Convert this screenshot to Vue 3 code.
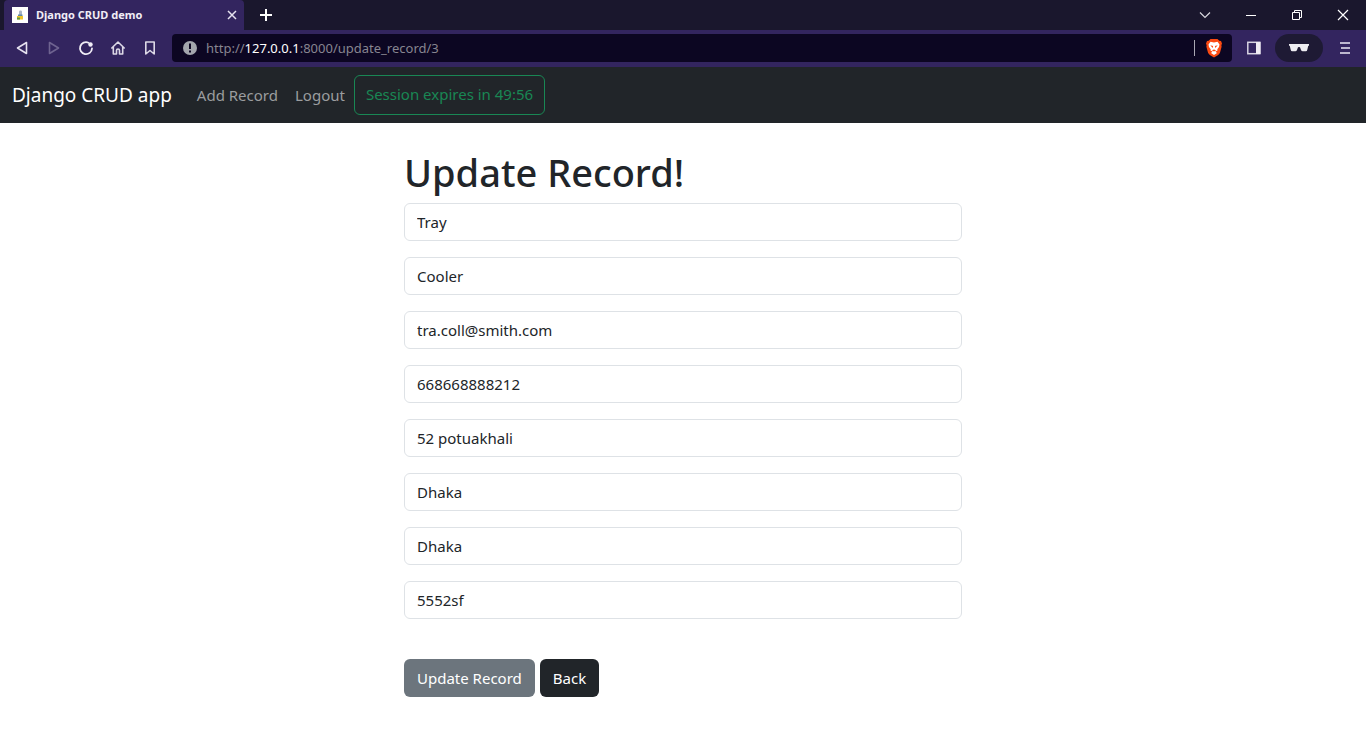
<script setup>
import { ref } from 'vue'

const fields = ref([
  { id: 'first_name', label: 'First name', type: 'text', value: 'Tray' },
  { id: 'last_name', label: 'Last name', type: 'text', value: 'Cooler' },
  { id: 'email', label: 'Email', type: 'text', value: 'tra.coll@smith.com' },
  { id: 'phone', label: 'Phone', type: 'text', value: '668668888212' },
  { id: 'address', label: 'Address', type: 'text', value: '52 potuakhali' },
  { id: 'city', label: 'City', type: 'text', value: 'Dhaka' },
  { id: 'state', label: 'State', type: 'text', value: 'Dhaka' },
  { id: 'zipcode', label: 'Zipcode', type: 'text', value: '5552sf' },
])
</script>

<template>
  <div class="window">
    <header class="browser">
      <div class="titlebar">
        <div class="tab">
          <svg class="favicon" width="16" height="16" viewBox="0 0 16 16" aria-hidden="true">
            <rect width="16" height="16" fill="#fff" />
            <path d="M7 4.500C7 3 10 3 10 4.500V8H7z" fill="#a9b4c4" />
            <path d="M6 7.500h4.500v2H6z" fill="#5f86a8" />
            <path d="M5 9h6v3.500H5z" fill="#f0c52c" />
            <path d="M5 10.500h3v2H5z" fill="#5d9a46" />
          </svg>
          <span class="tab-title">Django CRUD demo</span>
          <button type="button" class="icon-btn tab-close" aria-label="Close tab">
            <svg width="16" height="16" viewBox="0 0 16 16"><path d="M4 4l8 8M12 4l-8 8" stroke="#e6e2f0" stroke-width="1.500" /></svg>
          </button>
        </div>
        <button type="button" class="icon-btn new-tab" aria-label="New tab">
          <svg width="16" height="16" viewBox="0 0 16 16"><path d="M8 2v12M2 8h12" stroke="#fff" stroke-width="2" /></svg>
        </button>
        <div class="window-controls">
          <button type="button" class="icon-btn" aria-label="Search tabs">
            <svg width="16" height="16" viewBox="0 0 16 16"><path d="M3 5.500l5 5 5-5" fill="none" stroke="#d8d7dd" stroke-width="1.200" /></svg>
          </button>
          <button type="button" class="icon-btn" aria-label="Minimize">
            <svg width="16" height="16" viewBox="0 0 16 16"><path d="M3 8.500h10" stroke="#fff" /></svg>
          </button>
          <button type="button" class="icon-btn" aria-label="Restore">
            <svg width="16" height="16" viewBox="0 0 16 16"><path d="M3.500 5.500h7v7h-7zM5.500 5.500v-2h7v7h-2" fill="none" stroke="#fff" /></svg>
          </button>
          <button type="button" class="icon-btn" aria-label="Close">
            <svg width="16" height="16" viewBox="0 0 16 16"><path d="M3 3l10 10M13 3L3 13" stroke="#fff" stroke-width="1.200" /></svg>
          </button>
        </div>
      </div>

      <div class="toolbar">
        <div class="nav-buttons">
          <button type="button" class="icon-btn" aria-label="Back">
            <svg width="16" height="16" viewBox="0 0 16 16"><path d="M12.500 2.500v11L3.500 8z" fill="none" stroke="#e6e2f0" stroke-width="1.600" stroke-linejoin="round" /></svg>
          </button>
          <button type="button" class="icon-btn" aria-label="Forward">
            <svg width="16" height="16" viewBox="0 0 16 16"><path d="M3.500 2.500v11L12.500 8z" fill="none" stroke="#6e6390" stroke-width="1.600" stroke-linejoin="round" /></svg>
          </button>
          <button type="button" class="icon-btn" aria-label="Reload">
            <svg width="16" height="16" viewBox="0 0 16 16"><path d="M10.500 2.700A6 6 0 1 0 14 8.500" fill="none" stroke="#f0edf6" stroke-width="1.800" stroke-linecap="round" /><circle cx="12.500" cy="4.500" r="2.200" fill="#f0edf6" /></svg>
          </button>
          <button type="button" class="icon-btn" aria-label="Home">
            <svg width="16" height="16" viewBox="0 0 16 16"><path d="M1.800 8L8 2l6.200 6M3.300 7v7h3.200v-3.500a1.500 1.500 0 0 1 3 0V14h3.200V7" fill="none" stroke="#dcd8e6" stroke-width="1.600" stroke-linejoin="round" stroke-linecap="round" /></svg>
          </button>
          <button type="button" class="icon-btn" aria-label="Bookmark">
            <svg width="16" height="16" viewBox="0 0 16 16"><path d="M3.800 2h8.400v12L8 10.500 3.800 14z" fill="none" stroke="#dcd8e6" stroke-width="1.600" stroke-linejoin="round" /></svg>
          </button>
        </div>
        <div class="address">
          <svg width="16" height="16" viewBox="0 0 16 16" aria-hidden="true">
            <circle cx="8" cy="8" r="7" fill="#a3a6ad" />
            <path d="M8 3.500v5.500M8 10.500v2" stroke="#0c0622" stroke-width="2" />
          </svg>
          <a class="url" href="#">http://<span class="host">127.0.0.1</span>:8000/update_record/3</a>
          <span class="divider"></span>
          <button type="button" class="icon-btn" aria-label="Brave Shields">
            <svg width="18" height="20" viewBox="0 0 18 20">
              <path d="M5.500 1h7l1.800 1.800 1.700.2 1 2.500-.6 1.800.2 1.400-1.700 6.300-1.700 2L9 19.400 4.800 17l-1.700-2L1.400 8.700l.2-1.400L1 5.500 2 3l1.700-.2z" fill="#fb4a12" />
              <path d="M5.500 3.800L9 4.500l3.500-.7 2 2.700-.5 2.400-1.700 2.300.2 1.300-2 1.100L12 15l-3 2-3-2 1.500-1.400-2-1.100.2-1.300L4 8.900l-.5-2.400z" fill="#fff" />
              <path d="M5.300 7.300l2.800.8-.4 2zM12.700 7.300l-2.800.8.4 2zM6.800 12.200L9 11.400l2.200.8L9 13.600z" fill="#fb4a12" />
            </svg>
          </button>
        </div>
        <div class="toolbar-end">
          <button type="button" class="icon-btn" aria-label="Sidebar">
            <svg width="16" height="16" viewBox="0 0 16 16"><rect x="1.800" y="2.300" width="12" height="11.400" fill="none" stroke="#d8d4e2" stroke-width="1.500" /><path d="M10 2h4.500v12H10z" fill="#f0edf4" /></svg>
          </button>
          <button type="button" class="icon-btn private" aria-label="Private window">
            <svg width="20" height="16" viewBox="0 0 20 16"><path d="M0 4h20v1.500l-.8.500-.9 3.700q-.3 1.600-1.500 1.600h-3.100q-1.200 0-1.700-1.300l-1-2.700q-1-.8-2 0L8 10q-.5 1.300-1.700 1.300H3.200Q2 11.300 1.700 9.700L.8 6 0 5.500z" fill="#eeedf1" /></svg>
          </button>
          <button type="button" class="icon-btn" aria-label="Menu">
            <svg width="16" height="16" viewBox="0 0 16 16"><path d="M3 3h10M4 8h9M3 13h10" stroke="#bdb7cf" stroke-width="2" /></svg>
          </button>
        </div>
      </div>
    </header>

    <nav class="navbar">
      <a class="brand" href="#">Django CRUD app</a>
      <a class="nav-link" href="#">Add Record</a>
      <a class="nav-link" href="#">Logout</a>
      <button type="button" class="btn session">Session expires in 49:56</button>
    </nav>

    <main class="content">
      <h1>Update Record!</h1>
      <form @submit.prevent>
        <div class="fields">
          <input
            v-for="field in fields"
            :id="field.id"
            :key="field.id"
            v-model="field.value"
            class="form-control"
            :type="field.type"
            :aria-label="field.label"
          />
        </div>
        <div class="actions">
          <button type="submit" class="btn secondary">Update Record</button>
          <a class="btn dark" href="#">Back</a>
        </div>
      </form>
    </main>
  </div>
</template>

<style>
body {
  margin: 0;
  background: #fff;
}
</style>

<style scoped>
* {
  box-sizing: border-box;
}
.window {
  font-family: "Segoe UI", "Noto Sans", "Open Sans", sans-serif;
  font-size: 15px;
  line-height: 24px;
  color: #212529;
}
a {
  color: inherit;
  text-decoration: none;
}
button,
input {
  font: inherit;
}
svg {
  display: block;
  flex: none;
}
.icon-btn {
  display: flex;
  align-items: center;
  justify-content: center;
  flex: none;
  padding: 0;
  border: 0;
  background: none;
}
.titlebar {
  display: flex;
  align-items: center;
  height: 30px;
  padding-left: 4px;
  background: #1a172d;
}
.tab {
  display: flex;
  align-items: center;
  gap: 8px;
  width: 240px;
  height: 30px;
  padding: 0 4px 0 8px;
  border-radius: 4px 4px 0 0;
  background: #33255f;
  color: #f0edf6;
  font-size: 11px;
  font-weight: 700;
}
.tab-title {
  flex: 1;
}
.new-tab {
  width: 32px;
  height: 30px;
  margin-left: 6px;
}
.window-controls {
  display: flex;
  margin-left: auto;
}
.window-controls .icon-btn {
  width: 46px;
  height: 28px;
}
.toolbar {
  display: flex;
  padding: 4px 0 5px 6px;
  background: #33255f;
}
.nav-buttons {
  display: flex;
}
.nav-buttons .icon-btn {
  width: 32px;
  height: 28px;
}
.address {
  display: flex;
  align-items: center;
  flex: 1;
  height: 28px;
  margin-left: 6px;
  padding: 0 9px 0 10px;
  border-radius: 4px;
  background: #0c0622;
  color: #878590;
  font-size: 13px;
}
.url {
  flex: 1;
  margin-left: 8px;
}
.host {
  color: #fff;
}
.divider {
  width: 1px;
  height: 16px;
  margin-right: 10px;
  background: #a9a7b3;
}
.toolbar-end {
  display: flex;
}
.toolbar-end .icon-btn {
  width: 43px;
  height: 28px;
}
.toolbar-end .private {
  width: 48px;
  border-radius: 14px;
  background: #1e1a34;
}
.navbar {
  display: flex;
  align-items: center;
  gap: 1px;
  padding: 8px 12px;
  background: #212529;
}
.brand {
  margin-right: 16px;
  color: #fff;
  font-size: 19px;
  line-height: 30px;
}
.nav-link {
  padding: 8px;
  color: #9b9d9f;
}
.btn {
  display: inline-block;
  padding: 6px 12px;
  border: 1px solid transparent;
  border-radius: 6px;
  color: #fff;
}
.session {
  padding: 6px 11px 8px;
  border-color: #198754;
  background: transparent;
  color: #198754;
}
.content {
  max-width: 558px;
  margin: 0 auto;
  padding: 26px 0;
}
h1 {
  margin: 0 0 8px;
  font-size: 38px;
  font-weight: 500;
  line-height: 46px;
}
.fields {
  display: flex;
  flex-direction: column;
  gap: 16px;
}
.form-control {
  width: 100%;
  height: 38px;
  padding: 6px 12px;
  border: 1px solid #dee2e6;
  border-radius: 6px;
  background: #fff;
  color: #212529;
}
.actions {
  display: flex;
  gap: 5px;
  margin-top: 40px;
}
.secondary {
  background: #6c757d;
}
.dark {
  background: #212529;
}
</style>
